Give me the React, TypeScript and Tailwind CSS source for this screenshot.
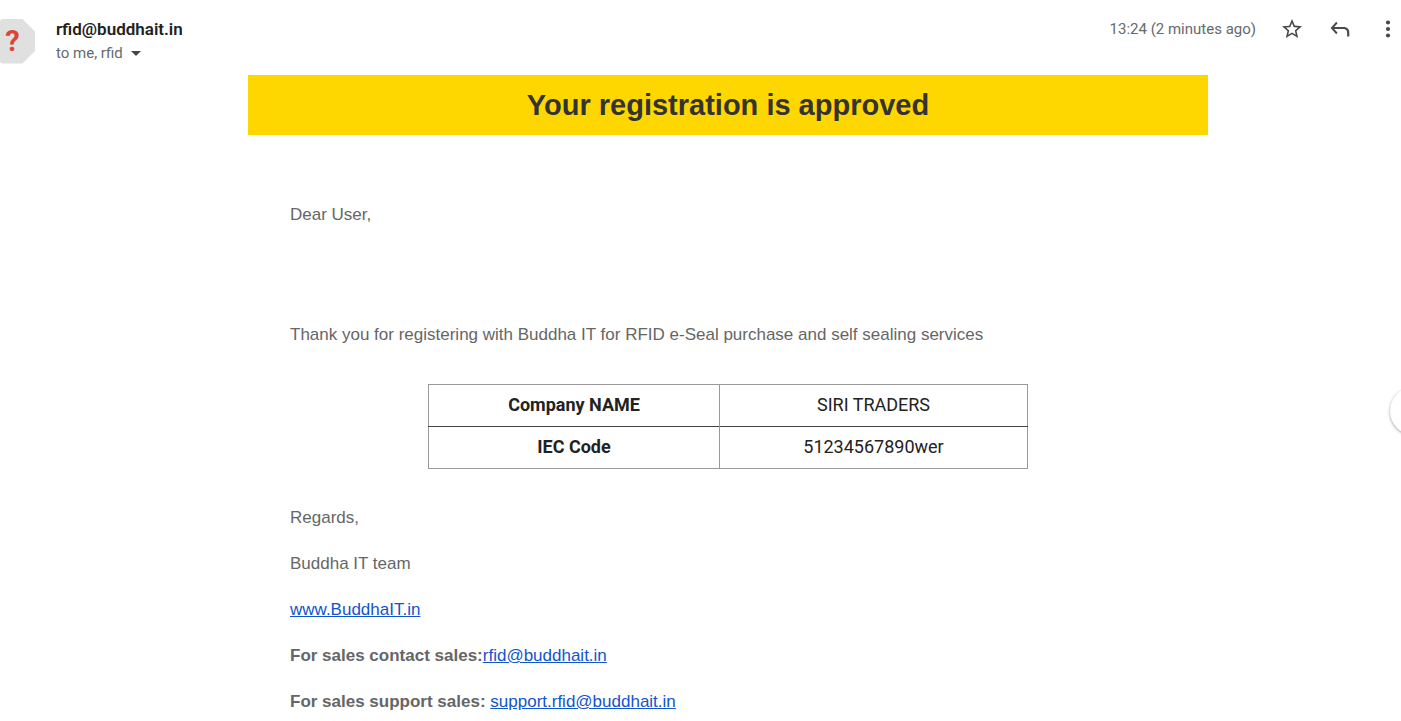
import type { ReactNode } from "react";

const details = [
  { label: "Company NAME", value: "SIRI TRADERS" },
  { label: "IEC Code", value: "51234567890wer" },
];

function IconButton({ label, children }: { label: string; children: ReactNode }) {
  return (
    <button type="button" aria-label={label} className="flex size-6 items-center justify-center">
      <svg viewBox="0 0 24 24" className="size-6 fill-[#4a4a4d]" aria-hidden="true">
        {children}
      </svg>
    </button>
  );
}

function MailLink({ href, children }: { href: string; children: ReactNode }) {
  return (
    <a href={href} className="font-normal text-[#1155cc] underline">
      {children}
    </a>
  );
}

function Avatar() {
  return (
    <svg viewBox="0 0 35 45" className="h-[45px] w-[35px] shrink-0" aria-hidden="true">
      <path d="M3 0H22.5L35 12.5V32L22.5 44.5H3Q0 44.5 0 41.5V3Q0 0 3 0Z" fill="#e0e0e0" />
      <text x="12.5" y="32" textAnchor="middle" fontSize="29" fontWeight="700" fill="#db4437" fontFamily="Roboto, sans-serif">
        ?
      </text>
    </svg>
  );
}

function MessageHeader() {
  return (
    <header className="flex items-start pt-[19px]">
      <Avatar />
      <div className="ml-[21px] flex-1">
        <h3 className="text-[17px] leading-5 font-semibold text-[#202124]">rfid@buddhait.in</h3>
        <div className="mt-1 flex items-center gap-2 text-[15px] leading-5 text-[#666a6e]">
          <span>to me, rfid</span>
          <button type="button" aria-label="Show details">
            <svg viewBox="0 0 10 5" className="h-[5px] w-[10px] fill-[#444746]" aria-hidden="true">
              <path d="M0 0H10L5 5Z" />
            </svg>
          </button>
        </div>
      </div>
      <div className="-mt-0.5 flex items-center gap-6 pr-px">
        <span className="text-[15px] text-[#666a6e]">13:24 (2 minutes ago)</span>
        <IconButton label="Star">
          <path d="M22 9.24l-7.19-.62L12 2 9.19 8.63 2 9.24l5.46 4.73L5.82 21 12 17.27 18.18 21l-1.63-7.03L22 9.24zM12 15.4l-3.76 2.27 1-4.28-3.32-2.88 4.38-.38L12 6.1l1.71 4.04 4.38.38-3.32 2.88 1 4.28L12 15.4z" />
        </IconButton>
        <IconButton label="Reply">
          <path d="M9.6 6.2L8.2 4.8 2.6 11.1 8.2 17.2 9.6 15.8 6.2 12.1H15.5C17.8 12.1 19.1 13.4 19.1 15.6V19.4H21.3V15.2C21.3 12.1 19 10 15.8 10H6.2Z" />
        </IconButton>
        <IconButton label="More">
          <circle cx="12" cy="5.5" r="2.1" />
          <circle cx="12" cy="12" r="2.1" />
          <circle cx="12" cy="18.5" r="2.1" />
        </IconButton>
      </div>
    </header>
  );
}

function DetailsTable() {
  return (
    <table className="mx-auto w-full max-w-[600px] table-fixed border-collapse border border-[#999999] text-center font-[Roboto,sans-serif] text-lg leading-6 text-[#222222]">
      <colgroup>
        <col className="w-[291px]" />
        <col />
      </colgroup>
      <tbody>
        {details.map((row) => (
          <tr key={row.label} className="border-t border-[#999999] last:border-[#444444]">
            <th scope="row" className="h-[42px] border-r border-[#999999] pb-0.5 font-bold">
              {row.label}
            </th>
            <td className="pb-0.5">{row.value}</td>
          </tr>
        ))}
      </tbody>
    </table>
  );
}

export default function App() {
  return (
    <div className="relative overflow-hidden bg-white font-[Roboto,sans-serif]">
      <MessageHeader />

      <main className="mt-[11px] pr-px pl-14">
        <article className="mx-auto max-w-[960px] font-['Liberation_Sans',Arial,sans-serif] text-[17px] leading-[26px] text-[#666666]">
          <h1 className="bg-[#ffd700] py-3 text-center text-[29px] leading-9 font-bold text-[#333333]">
            Your registration is approved
          </h1>
          <div className="px-[42px] pt-[67px]">
            <p>Dear User,</p>
            <p className="mt-[94px] mb-9">
              Thank you for registering with Buddha IT for RFID e-Seal purchase and self sealing services
            </p>
            <DetailsTable />
            <div className="mt-9 flex flex-col gap-5 pb-2">
              <p>Regards,</p>
              <p>Buddha IT team</p>
              <p>
                <MailLink href="http://www.buddhait.in">www.BuddhaIT.in</MailLink>
              </p>
              <p className="font-bold">
                For sales contact sales:
                <MailLink href="mailto:rfid@buddhait.in">rfid@buddhait.in</MailLink>
              </p>
              <p className="font-bold">
                For sales support sales:{" "}
                <MailLink href="mailto:support.rfid@buddhait.in">support.rfid@buddhait.in</MailLink>
              </p>
            </div>
          </div>
        </article>
      </main>

      {/* Side panel toggle, mostly tucked behind the right edge */}
      <button
        type="button"
        aria-label="Show side panel"
        className="absolute top-[387px] -right-[37px] size-12 rounded-full bg-white shadow-[0_1px_3px_rgba(60,64,67,0.5)]"
      />
    </div>
  );
}
